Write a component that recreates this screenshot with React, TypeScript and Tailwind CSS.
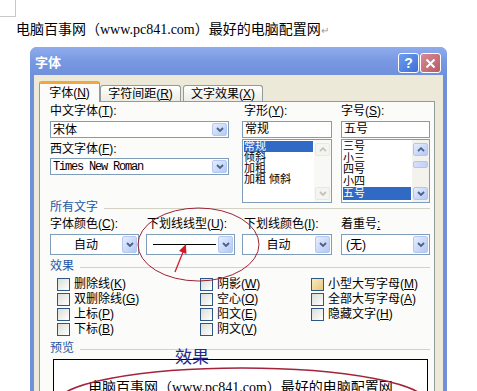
import React from "react";

const U = ({ c }: { c: string }) => (
  <>
    (<span className="underline underline-offset-1">{c}</span>)
  </>
);

function Chevron({ up, color }: { up?: boolean; color: string }) {
  return (
    <svg width="8" height="5" viewBox="0 0 8 5">
      <path d={up ? "M1 4.2 L4 1.2 L7 4.2" : "M1 1 L4 4 L7 1"} stroke={color} strokeWidth="1.8" fill="none" />
    </svg>
  );
}

function DropBtn() {
  return (
    <div className="w-[15px] m-[1px] rounded-[2px] border border-[#b7c8f0] bg-linear-to-br from-[#e6eefd] to-[#b3c8f5] flex items-center justify-center">
      <Chevron color="#4d6185" />
    </div>
  );
}

function Combo({ cls, center, children }: { cls: string; center?: boolean; children?: React.ReactNode }) {
  return (
    <div className={`flex border border-[#7f9db9] bg-white ${cls}`}>
      <div className={`flex-1 flex items-center min-w-0 whitespace-nowrap ${center ? "justify-center" : "pl-[2px]"}`}>{children}</div>
      <DropBtn />
    </div>
  );
}

function ScrollBar({ enabled }: { enabled?: boolean }) {
  const btn = enabled
    ? "border-[#b3c6f2] bg-linear-to-br from-[#e6eefd] to-[#b3c8f5]"
    : "border-[#e8e8e0] bg-[#f4f4f0]";
  const col = enabled ? "#4d6185" : "#c4c4bc";
  return (
    <div className={`w-[17px] flex flex-col ${enabled ? "bg-[#f3f2ec]" : "bg-[#f8f8f5]"}`}>
      <div className={`mx-[1px] mt-[3px] h-[13px] rounded-[2px] border flex items-center justify-center ${btn}`}>
        <Chevron up color={col} />
      </div>
      <div className="flex-1">
        {enabled && (
          <div className="mx-[1px] mt-[5px] h-[7px] rounded-[2px] border border-[#b3c6f2] bg-linear-to-r from-[#d4e0fb] to-[#c0d2f7]" />
        )}
      </div>
      <div className={`mx-[1px] mb-[2px] h-[13px] rounded-[2px] border flex items-center justify-center ${btn}`}>
        <Chevron color={col} />
      </div>
    </div>
  );
}

function Group({ title }: { title: string }) {
  return (
    <div className="flex items-center h-[15px] leading-[15px] text-[#2456a6]">
      <span>{title}</span>
      <div className="flex-1 ml-[6px] mt-[2px] h-px bg-[#d3d2c4]" />
    </div>
  );
}

function Check({ label, k, tan }: { label: string; k: string; tan?: boolean }) {
  return (
    <div className="flex items-center h-[15px] whitespace-nowrap">
      <div
        className={`w-[13px] h-[13px] border border-[#2b5685] ${
          tan ? "bg-linear-to-br from-[#fbe9bd] to-[#e6c77c]" : "bg-linear-to-br from-[#dcdcd7] to-white"
        }`}
      />
      <span className="ml-[4px] leading-[15px]">
        {label}
        <U c={k} />
      </span>
    </div>
  );
}

const tabBase = "h-[16px] mb-[1px] px-[7px] rounded-t-[3px] border border-b-0 border-[#919b9c] bg-linear-to-b from-white to-[#ecebe5] flex items-center whitespace-nowrap";

export default function App() {
  return (
    <div className="relative w-[477px] h-[391px] overflow-hidden bg-white text-[12px] text-black font-['Liberation_Sans','Noto_Sans_CJK_SC',sans-serif]">
      <div className="w-[16px] h-[17px] border-r border-b border-[#c8c8c8]" />
      <div className="mt-[4px] pl-[16px] h-[18px] text-[14px] leading-[18px] whitespace-nowrap font-['Liberation_Serif','Noto_Sans_CJK_SC',serif]">
        电脑百事网（www.pc841.com）最好的电脑配置网
        <span className="text-[#9a9a9a] text-[10px]">↵</span>
      </div>

      <div className="mt-[8px] ml-[30px] w-[417px] rounded-t-[7px] bg-[#7090da]">
        <div className="h-[28px] rounded-t-[7px] bg-linear-to-b from-[#90acec] via-[#7898e2] to-[#7090dc] flex items-start pt-[6px] pl-[5px] pr-[6px]">
          <div className="h-[20px] leading-[20px] text-[13px] font-bold text-white">字体</div>
          <div className="ml-auto flex gap-[1px]">
            <div className="w-[21px] h-[20px] rounded-[3px] border border-white bg-linear-to-br from-[#6d9cf0] to-[#3f6fd6] flex items-center justify-center text-white text-[14px] font-bold">
              ?
            </div>
            <div className="w-[21px] h-[20px] rounded-[3px] border border-white bg-linear-to-br from-[#d88a94] to-[#b85a66] flex items-center justify-center">
              <svg width="11" height="11" viewBox="0 0 11 11">
                <path d="M1.5 1.5 L9.5 9.5 M9.5 1.5 L1.5 9.5" stroke="white" strokeWidth="2" />
              </svg>
            </div>
          </div>
        </div>

        <div className="mx-[4px] bg-[#ece9d8] pt-[6px] pl-[5px] pr-[8px]">
          <div className="flex items-end h-[21px] -mb-[1px]">
            <div className="relative z-10 h-[20px] w-[61px] border-x border-[#919b9c] bg-[#fbfbf9] flex items-center justify-center whitespace-nowrap">
              <div className="absolute -top-px -left-px -right-px h-[3px] rounded-t-[3px] bg-[#f0a83c]" />
              <span className="mt-[2px]">
                字体<U c="N" />
              </span>
            </div>
            <div className={`${tabBase} w-[81px] justify-center`}>
              字符间距<U c="R" />
            </div>
            <div className={`${tabBase} ml-[2px] w-[80px] justify-center`}>
              文字效果<U c="X" />
            </div>
          </div>

          <div className="h-[300px] border border-[#919b9c] bg-[#fbfbf9] pl-[10px] pr-[4px] pt-[2px]">
            <div className="flex h-[96px]">
              <div className="w-[179px]">
                <div className="h-[15px] leading-[15px]">
                  中文字体<U c="T" />:
                </div>
                <Combo cls="mt-[2px] h-[17px]">宋体</Combo>
                <div className="mt-[4px] h-[15px] leading-[15px]">
                  西文字体<U c="F" />:
                </div>
                <Combo cls="mt-[1px] h-[17px]">
                  <span className="font-['Liberation_Mono',monospace] tracking-[-1.2px]">Times New Roman</span>
                </Combo>
              </div>

              <div className="ml-[13px] w-[90px]">
                <div className="h-[15px] leading-[15px] pl-[2px]">
                  字形<U c="Y" />:
                </div>
                <div className="mt-[2px] h-[17px] border border-[#7f9db9] bg-white pl-[2px] leading-[15px]">常规</div>
                <div className="mt-[1px] h-[64px] border border-[#7f9db9] bg-white flex">
                  <div className="flex-1 pt-[1px] px-[1px] text-[11px] leading-[11px]">
                    <div className="bg-[#316ac5] text-white">常规</div>
                    <div>倾斜</div>
                    <div>加粗</div>
                    <div>加粗 倾斜</div>
                  </div>
                  <ScrollBar />
                </div>
              </div>

              <div className="ml-[9px] w-[89px]">
                <div className="h-[15px] leading-[15px]">
                  字号<U c="S" />:
                </div>
                <div className="mt-[2px] h-[17px] border border-[#7f9db9] bg-white pl-[2px] leading-[15px]">五号</div>
                <div className="mt-[1px] h-[64px] border border-[#7f9db9] bg-white flex">
                  <div className="flex-1 pt-[1px] px-[1px] text-[11px] leading-[11.5px]">
                    <div>三号</div>
                    <div>小三</div>
                    <div>四号</div>
                    <div>小四</div>
                    <div className="h-[13px] leading-[13px] bg-[#316ac5] text-white">五号</div>
                  </div>
                  <ScrollBar enabled />
                </div>
              </div>
            </div>

            <Group title="所有文字" />

            <div className="mt-[2px] flex">
              <div className="w-[89px]">
                <div className="h-[15px] leading-[15px]">
                  字体颜色<U c="C" />:
                </div>
                <Combo cls="mt-[2px] h-[21px]" center>
                  自动
                </Combo>
              </div>
              <div className="ml-[7px] w-[89px]">
                <div className="h-[15px] leading-[15px] pl-[1px]">
                  下划线线型<U c="U" />:
                </div>
                <Combo cls="mt-[2px] h-[21px]">
                  <div className="ml-[4px] w-[63px] h-px bg-black" />
                </Combo>
              </div>
              <div className="ml-[7px] w-[90px]">
                <div className="h-[15px] leading-[15px] pl-[2px]">
                  下划线颜色<U c="I" />:
                </div>
                <Combo cls="mt-[2px] h-[21px]" center>
                  自动
                </Combo>
              </div>
              <div className="ml-[9px] w-[89px]">
                <div className="h-[15px] leading-[15px]">
                  着重号<span className="underline">:</span>
                </div>
                <Combo cls="mt-[2px] h-[21px]">
                  <span className="pl-[2px]">(无)</span>
                </Combo>
              </div>
            </div>

            <div className="mt-[4px]">
              <Group title="效果" />
            </div>

            <div className="mt-[3px] flex">
              <div className="pl-[7px] w-[150px]">
                <Check label="删除线" k="K" />
                <Check label="双删除线" k="G" />
                <Check label="上标" k="P" />
                <Check label="下标" k="B" />
              </div>
              <div className="w-[111px]">
                <Check label="阴影" k="W" />
                <Check label="空心" k="O" />
                <Check label="阳文" k="E" />
                <Check label="阴文" k="V" />
              </div>
              <div>
                <Check label="小型大写字母" k="M" tan />
                <Check label="全部大写字母" k="A" />
                <Check label="隐藏文字" k="H" />
              </div>
            </div>

            <div className="mt-[4px]">
              <Group title="预览" />
            </div>

            <div className="mt-[3px] ml-[3px] w-[375px] h-[60px] border border-black bg-white text-center pt-[19px] text-[14px] leading-[18px] whitespace-nowrap font-['Liberation_Serif','Noto_Sans_CJK_SC',serif]">
              电脑百事网（www.pc841.com）最好的电脑配置网
            </div>
          </div>
        </div>
      </div>

      <div className="absolute left-[175px] top-[348px] text-[17px] leading-[20px] text-[#1f2a8a]">效果</div>

      <svg className="absolute left-0 top-0 pointer-events-none" width="477" height="391" viewBox="0 0 477 391">
        <ellipse cx="198.5" cy="244.5" rx="60.5" ry="36.5" fill="none" stroke="#9b2335" strokeWidth="1" />
        <line x1="175" y1="272" x2="183" y2="252" stroke="#d11a2a" strokeWidth="1.3" />
        <polygon points="186,244 179,251 186.4,254" fill="#d11a2a" />
        <ellipse cx="242" cy="403" rx="185" ry="35" fill="none" stroke="#a3243a" strokeWidth="1.3" />
      </svg>
    </div>
  );
}
